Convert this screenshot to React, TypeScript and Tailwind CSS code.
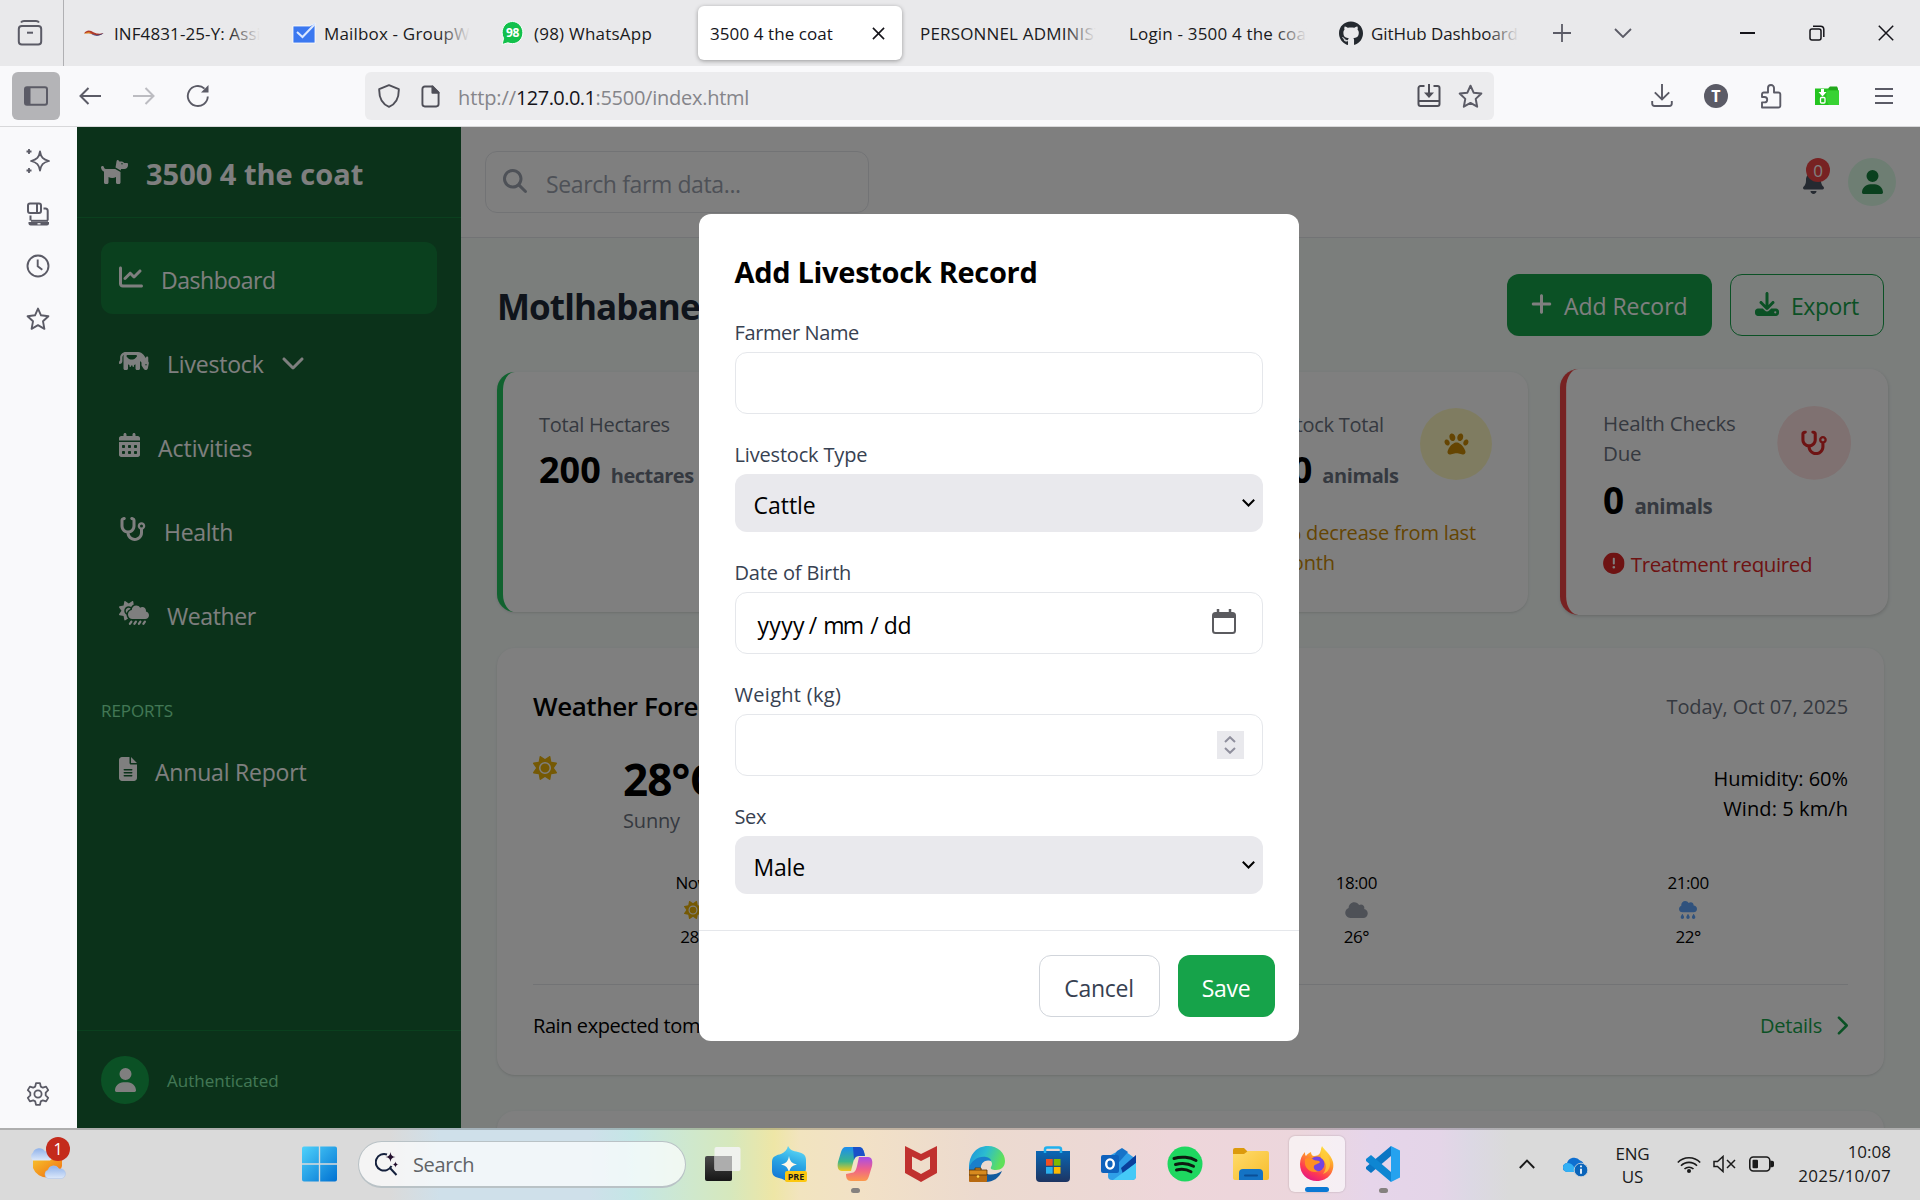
import type { ComponentType, ReactNode } from 'react';
import {
  FaBell,
  FaCalendarDays,
  FaChartLine,
  FaChevronDown,
  FaChevronRight,
  FaCircleExclamation,
  FaCloud,
  FaCloudRain,
  FaCloudSunRain,
  FaCow,
  FaDog,
  FaDownload,
  FaFileLines,
  FaGithub,
  FaMagnifyingGlass,
  FaPaw,
  FaPlus,
  FaStethoscope,
  FaSun,
  FaUser,
} from 'react-icons/fa6';

type IconType = ComponentType<{ className?: string }>;

/* ---------- Browser tab strip ---------- */

function Tab({ icon, title, width, tracking, fade }: { icon?: ReactNode; title: string; width: string; tracking: string; fade?: boolean }) {
  return (
    <div className={`flex h-full shrink-0 items-center ${width}`}>
      {icon}
      <div className="relative min-w-0 flex-1 overflow-hidden pt-px">
        <span className={`whitespace-nowrap text-[17px] leading-6 text-[#1a1a20] ${tracking}`}>{title}</span>
        {fade && <div className="absolute inset-y-0 right-0 w-8 bg-gradient-to-r from-transparent to-[#e9e9eb]" />}
      </div>
    </div>
  );
}

function TabBar() {
  return (
    <div className="relative flex h-[66px] shrink-0 items-center bg-[#e9e9eb]">
      <div className="flex h-full w-16 shrink-0 items-center border-r border-[#b0b0b3] pl-[17px]">
        <svg viewBox="0 0 26 26" className="h-[26px] w-[26px]" fill="none" stroke="#5b5b66" strokeWidth="2">
          <path d="M4 2.5 Q5 1 7 1 H19 Q21 1 22 2.5" />
          <rect x="1.8" y="6" width="22.4" height="18.5" rx="3" />
          <path d="M10 12.7h6" />
        </svg>
      </div>
      <div className="flex h-full items-center pl-[18px]">
        <Tab
          width="w-[210px] pr-[32px]"
          tracking="tracking-[0.1px]"
          fade
          title="INF4831-25-Y: Assignment"
          icon={
            <svg viewBox="0 0 24 24" className="mr-2 h-6 w-6 shrink-0">
              <path d="M2 12.500C5 8.500 8 9 12 11.500c3.500 1.500 6 1.500 9.500.500-3 3-7.500 2.500-10.500 1.500-3-1.500-6-1.500-9-1z" fill="#b03a2a" />
              <path d="M9 12.800c4 1.700 8 1.500 12.500-.8-3.500 3.300-8.500 3.600-12.500.8z" fill="#2a3170" />
              <path d="M2 12.800c3-2 6-2 8 0-3-.8-5-.5-8 0z" fill="#f0a020" />
            </svg>
          }
        />
        <Tab
          width="w-[209px] pr-[31px]"
          tracking="tracking-[0.17px]"
          fade
          title="Mailbox - GroupWise"
          icon={
            <svg viewBox="0 0 24 24" className="mr-2 h-6 w-6 shrink-0">
              <path d="M1 5h17l5-3v20H1z" fill="#3b78f0" stroke="#fff" strokeWidth=".8" />
              <path d="M5 11l5.500 5L23 3" fill="none" stroke="#dbe8ff" strokeWidth="2" />
            </svg>
          }
        />
        <Tab
          width="w-[197px]"
          tracking="tracking-[0.22px]"
          title="(98) WhatsApp"
          icon={
            <span className="relative mr-2.5 flex h-[26px] w-[23px] shrink-0 items-center justify-center">
              <svg viewBox="0 0 24 26" className="absolute inset-0 h-[26px] w-[23px]">
                <path d="M12 1C6 1 1.200 6 1.200 12.500c0 2.300.5 4.300 1.500 6L1.200 25l6-1.800c1.500.6 3 .9 4.800.9 6 0 10.800-5 10.800-11.300S18 1 12 1z" fill="#12c04b" stroke="#fff" strokeWidth="1" />
              </svg>
              <span className="relative text-[12px] font-bold leading-none tracking-tight text-white">98</span>
            </span>
          }
        />
        <div className="flex h-[54px] w-[204px] shrink-0 items-center justify-between rounded-md bg-white pl-3 pr-[17px] shadow-[0_1px_4px_rgba(0,0,0,0.35)]">
          <span className="whitespace-nowrap pt-px text-[17px] leading-6 tracking-[0.08px] text-[#15141a]">3500 4 the coat</span>
          <svg viewBox="0 0 14 14" className="h-[13px] w-[13px]" stroke="#15141a" strokeWidth="1.700">
            <path d="M1 1l12 12M13 1L1 13" />
          </svg>
        </div>
        <div className="w-[18px]" />
        <Tab width="w-[209px] pr-[33px]" tracking="tracking-[0.17px]" fade title="PERSONNEL ADMINISTRATION" />
        <Tab width="w-[210px] pr-[32px]" tracking="tracking-[0.18px]" fade title="Login - 3500 4 the coat" />
        <Tab width="w-[180px]" tracking="tracking-[-0.08px]" fade title="GitHub Dashboard" icon={<FaGithub className="mr-2 h-[25px] w-[24px] shrink-0 text-[#24292f]" />} />
      </div>
      <div className="ml-[34px] flex items-center">
        <svg viewBox="0 0 18 18" className="h-[18px] w-[18px]" stroke="#5b5b66" strokeWidth="1.800">
          <path d="M9 0v18M0 9h18" />
        </svg>
        <svg viewBox="0 0 18 10" className="ml-[43px] h-[10px] w-[18px]" stroke="#5b5b66" strokeWidth="1.800" fill="none">
          <path d="M1 1l8 8 8-8" />
        </svg>
      </div>
      <div className="ml-auto flex items-center pr-[26px]">
        <div className="h-[1.500px] w-[15px] bg-[#15141a]" />
        <svg viewBox="0 0 16 16" className="ml-[54px] h-4 w-4" stroke="#15141a" strokeWidth="1.500" fill="none">
          <rect x="1" y="4" width="11" height="11" rx="2" />
          <path d="M4 1.200h7.500a3.300 3.300 0 013.300 3.300V12" />
        </svg>
        <svg viewBox="0 0 16 16" className="ml-[53px] h-4 w-4" stroke="#15141a" strokeWidth="1.500">
          <path d="M.8.8l14.400 14.400M15.200.8L.8 15.200" />
        </svg>
      </div>
    </div>
  );
}

/* ---------- Navigation toolbar ---------- */

function StarOutline({ className }: { className?: string }) {
  return (
    <svg viewBox="0 0 24 24" className={className} fill="none" stroke="#5b5b66" strokeWidth="1.900" strokeLinejoin="round">
      <path d="M12 1.600l3 6.700 7.400.9-5.400 5.100 1.400 7.500L12 18.200l-6.400 3.600L7 14.300 1.600 9.200 9 8.300z" />
    </svg>
  );
}

function Toolbar() {
  return (
    <div className="flex h-[61px] shrink-0 items-center border-b border-[#d8d8da] bg-[#f9f9fb]">
      <div className="ml-3 flex h-12 w-12 items-center justify-center rounded-md bg-[#b4b4b7]">
        <svg viewBox="0 0 24 20" className="h-5 w-6">
          <rect x="1" y="1.200" width="22" height="17.600" rx="2" fill="none" stroke="#5b5b66" strokeWidth="2" />
          <rect x="1" y="1.200" width="5.500" height="17.600" fill="#5b5b66" />
        </svg>
      </div>
      <svg viewBox="0 0 22 18" className="ml-[19px] h-[18px] w-[22px]" fill="none" stroke="#5b5b66" strokeWidth="2">
        <path d="M22 9H1.500M9.500 1l-8 8 8 8" />
      </svg>
      <svg viewBox="0 0 22 18" className="ml-8 h-[18px] w-[22px]" fill="none" stroke="#bcbcc1" strokeWidth="2">
        <path d="M0 9h20.500M12.500 1l8 8-8 8" />
      </svg>
      <svg viewBox="0 0 24 24" className="ml-[31px] h-6 w-6" fill="none" stroke="#5b5b66" strokeWidth="1.900">
        <path d="M21.800 12.500A10 10 0 1 1 18.500 4.600" />
        <path d="M22.500 1v7.500H15z" fill="#5b5b66" stroke="none" />
      </svg>
      <div className="ml-[155px] flex h-12 w-[1129px] items-center rounded-md bg-[#ececee] pl-[13px] pr-[11px]">
        <svg viewBox="0 0 22 24" className="h-6 w-[22px]" fill="none" stroke="#4f4f58" strokeWidth="1.900" strokeLinejoin="round">
          <path d="M11 1.200l9.800 4C21 14 18 20 11 22.800 4 20 1 14 1.200 5.200z" />
        </svg>
        <svg viewBox="0 0 20 24" className="ml-[21px] h-[23px] w-[19px]" fill="none" stroke="#4f4f58" strokeWidth="2" strokeLinejoin="round">
          <path d="M12 1.500H4A2.500 2.500 0 001.500 4v16A2.500 2.500 0 004 22.500h12a2.500 2.500 0 002.500-2.500V8z" />
          <path d="M12 1.500V8h6.500z" fill="#4f4f58" />
        </svg>
        <div className="ml-[18px] flex pt-[3px] text-xl leading-7 text-[#85858a]">
          <span className="tracking-[-0.1px]">http://</span>
          <span className="tracking-[-0.55px] text-[#15141a]">127.0.0.1</span>
          <span className="tracking-[-0.26px]">:5500/index.html</span>
        </div>
        <svg viewBox="0 0 24 24" className="ml-auto h-6 w-6" fill="none" stroke="#4f4f58" strokeWidth="2">
          <path d="M7.500 2H3.500A2 2 0 001.500 4v16a2 2 0 002 2h17a2 2 0 002-2V4a2 2 0 00-2-2h-4M1.500 17h21M12 0v11" />
          <path d="M7 8.500h10l-5 5.500z" fill="#4f4f58" stroke="none" />
        </svg>
        <StarOutline className="ml-[17px] h-[25px] w-[25px]" />
      </div>
      <div className="ml-auto flex items-center pr-[27px]">
        <svg viewBox="0 0 22 24" className="h-6 w-[22px]" fill="none" stroke="#5b5b66" strokeWidth="1.900">
          <path d="M11 0v15M3.800 8.300L11 15.500l7.200-7.200M1.200 17v2.500A2.500 2.500 0 003.700 22h14.600a2.500 2.500 0 002.500-2.500V17" />
        </svg>
        <span className="ml-[31px] flex h-6 w-6 items-center justify-center rounded-full bg-[#5b5b66] text-base font-bold leading-none text-white">T</span>
        <svg viewBox="0 0 22 25" className="ml-8 h-[25px] w-[22px]" fill="none" stroke="#5b5b66" strokeWidth="1.900" strokeLinejoin="round">
          <path d="M2 23.500h16.500a1.800 1.800 0 001.800-1.800V10.300a1.800 1.800 0 00-1.800-1.800H14V4a3 3 0 00-6 0v4.500H3.800A1.800 1.800 0 002 10.300V13h2.500a2.700 2.700 0 010 5.400H2z" />
        </svg>
        <svg viewBox="0 0 24 20" className="ml-[33px] h-5 w-6">
          <path d="M13 2.500L15 .5h7l1 2v4H13z" fill="#22a81c" />
          <path d="M0 2.500h13l2 2h9V19H0z" fill="#24c41f" />
          <path d="M12 4.500h12V19H14c-3-4-3-9-2-14.500z" fill="#38d233" />
          <path d="M6 3h3v3h2.500l-4 4.500L3.500 6H6z" fill="#fff" />
          <rect x="5.500" y="11.500" width="4.500" height="5.500" rx="1" fill="none" stroke="#fff" strokeWidth="1.300" />
        </svg>
        <svg viewBox="0 0 18 16" className="ml-[36px] h-4 w-[18px]" stroke="#5b5b66" strokeWidth="1.900">
          <path d="M0 1h18M0 8h18M0 15h18" />
        </svg>
      </div>
    </div>
  );
}

function BrowserRail() {
  return (
    <div className="flex w-[77px] shrink-0 flex-col items-center bg-[#f9f9fb] pb-[22px] pr-0.5 pt-[22px]">
      <svg viewBox="0 0 24 24" className="h-6 w-6" fill="none" stroke="#5b5b66" strokeWidth="1.800" strokeLinejoin="round">
        <path d="M14 2.500c1 6 3 8 9 9.500-6 1.500-8 3.500-9 9.500-1-6-3-8-9-9.500 6-1.500 8-3.500 9-9.500zM3 0v5M.5 2.500h5M3 19v5M.5 21.500h5" />
      </svg>
      <svg viewBox="0 0 24 24" className="mt-[29px] h-6 w-6" fill="none" stroke="#5b5b66" strokeWidth="2">
        <rect x="2" y="1.500" width="13" height="9.500" rx="2" />
        <path d="M11 1.500V11M17.500 6.500h2A2.200 2.200 0 0121.700 9v9.500M4.500 13.500v5" />
        <path d="M2.500 20H23v1.500a2 2 0 01-2 2H4.500a2 2 0 01-2-2z" fill="#5b5b66" stroke="none" />
        <path d="M5 18.800h17" />
        <path d="M11.500 21.800h3" stroke="#f9f9fb" strokeWidth="1.300" />
      </svg>
      <svg viewBox="0 0 24 24" className="mt-7 h-6 w-6" fill="none" stroke="#5b5b66" strokeWidth="1.900">
        <circle cx="12" cy="12" r="10.500" />
        <path d="M11.700 5.500v6.700l4.600 3.600" />
      </svg>
      <StarOutline className="mt-[29px] h-6 w-6" />
      <svg viewBox="0 0 24 24" className="mt-auto h-6 w-6" fill="none" stroke="#5b5b66" strokeWidth="1.800" strokeLinejoin="round">
        <path d="M10 1.200h4l.8 3.400 2 1.100 3.300-1.100 2.100 3.500-2.500 2.500v2.800l2.500 2.500-2.100 3.500-3.300-1.100-2 1.100-.8 3.400h-4l-.8-3.400-2-1.100-3.300 1.100-2.100-3.500 2.500-2.500v-2.800L1.800 8.100l2.100-3.500 3.300 1.100 2-1.100z" />
        <circle cx="12" cy="12" r="3.600" />
      </svg>
    </div>
  );
}

/* ---------- Farm dashboard ---------- */

function NavItem({ icon: Icon, iconSize, label, tracking, active, children }: { icon: IconType; iconSize: string; label: string; tracking: string; active?: boolean; children?: ReactNode }) {
  return (
    <div className={`flex h-[72px] items-center rounded-xl px-[18px] ${active ? 'bg-[#15803d]' : ''}`}>
      <Icon className={`-mt-0.5 h-6 shrink-0 ${iconSize}`} />
      <span className={`ml-[18px] pt-[3px] text-[23px] leading-9 ${tracking}`}>{label}</span>
      {children}
    </div>
  );
}

function Sidebar() {
  return (
    <aside className="flex w-96 shrink-0 flex-col bg-[#166534] text-white">
      <div className="flex h-[91px] shrink-0 items-center border-b border-[#15803d] px-6">
        <FaDog className="h-6 w-[27px]" />
        <h1 className="ml-[18px] whitespace-nowrap pt-[3px] text-[29px] font-bold leading-[42px]">3500 4 the coat</h1>
      </div>
      <nav className="flex flex-col gap-3 px-6 pt-6">
        <NavItem icon={FaChartLine} iconSize="w-6" label="Dashboard" tracking="tracking-[-0.45px]" active />
        <NavItem icon={FaCow} iconSize="w-[30px]" label="Livestock" tracking="tracking-[-0.2px]">
          <FaChevronDown className="ml-[17px] h-[26px] w-[24px]" />
        </NavItem>
        <NavItem icon={FaCalendarDays} iconSize="w-[21px]" label="Activities" tracking="tracking-[-0.03px]" />
        <NavItem icon={FaStethoscope} iconSize="w-[27px]" label="Health" tracking="tracking-[-0.3px]" />
        <NavItem icon={FaCloudSunRain} iconSize="w-[30px]" label="Weather" tracking="tracking-[-0.4px]" />
        <div className="mt-[37px] flex flex-col gap-[11px]">
          <h3 className="text-[17px] leading-6 tracking-[-0.08px] text-[#86efac]">REPORTS</h3>
          <NavItem icon={FaFileLines} iconSize="w-[18px]" label="Annual Report" tracking="tracking-[-0.2px]" />
        </div>
      </nav>
      <div className="mt-auto flex h-[98px] shrink-0 items-center border-t border-[#15803d] px-6">
        <div className="flex h-12 w-12 items-center justify-center rounded-full bg-[#16a34a]">
          <FaUser className="h-6 w-[21px]" />
        </div>
        <span className="ml-[18px] pt-0.5 text-[17px] leading-6 text-[#86efac]">Authenticated</span>
      </div>
    </aside>
  );
}

function TopBar() {
  return (
    <header className="flex h-[111px] shrink-0 items-center justify-between border-b border-[#e5e7eb] bg-white px-6">
      <div className="flex h-[62px] w-96 items-center rounded-xl border border-[#e5e7eb] pl-[17px]">
        <FaMagnifyingGlass className="-mt-0.5 h-6 w-6 text-[#9ca3af]" />
        <span className="ml-[19px] pt-[3px] text-[23px] leading-9 tracking-[-0.38px] text-[#9ca3af]">Search farm data...</span>
      </div>
      <div className="flex items-center gap-6">
        <div className="relative flex h-12 w-[21px] items-center">
          <FaBell className="h-6 w-[21px] text-[#4b5563]" />
          <span className="absolute -right-[6px] top-0 flex h-6 w-6 items-center justify-center rounded-full bg-[#ef4444] text-[17px] leading-none text-white">0</span>
        </div>
        <div className="flex h-12 w-12 items-center justify-center rounded-full bg-[#dcfce7]">
          <FaUser className="h-6 w-[21px] text-[#15803d]" />
        </div>
      </div>
    </header>
  );
}

function StatCard({ border, label, value, unit, unitTracking, icon: Icon, badge, raised, children }: { border: string; label: string; value: string; unit: string; unitTracking: string; icon?: IconType; badge?: string; raised?: boolean; children?: ReactNode }) {
  return (
    <div className={`h-60 rounded-[18px] border-l-[6px] bg-white p-9 ${border} ${raised ? 'scale-[1.025] shadow' : 'shadow-sm'}`}>
      <div className="flex items-start justify-between">
        <div className="min-w-0 pt-0.5">
          <p className="text-xl leading-[30px] tracking-[-0.24px] text-[#6b7280]">{label}</p>
          <p className="mt-1.5 flex items-baseline whitespace-nowrap text-[36px] font-bold leading-[48px] text-black">
            {value}
            <span className={`ml-[10px] text-xl text-[#6b7280] ${unitTracking}`}>{unit}</span>
          </p>
        </div>
        {Icon && (
          <div className={`flex h-[72px] w-[72px] shrink-0 items-center justify-center rounded-full ${badge}`}>
            <Icon className="h-6 w-[27px]" />
          </div>
        )}
      </div>
      {children}
    </div>
  );
}

function Stats() {
  return (
    <div className="mt-9 grid grid-cols-4 gap-9">
      <StatCard border="border-[#22c55e]" label="Total Hectares" value="200" unit="hectares" unitTracking="tracking-[-0.5px]" />
      <StatCard border="border-[#3b82f6]" label="Farmers" value="12" unit="people" unitTracking="tracking-[-0.5px]" />
      <StatCard border="border-[#eab308]" label="Livestock Total" value="120" unit="animals" unitTracking="tracking-[-0.4px]" icon={FaPaw} badge="bg-[#fef9c3] text-[#ca8a04]">
        <div className="mt-6 pl-[23px] text-xl leading-[30px] tracking-[-0.18px] text-[#ca8a04]">
          5% decrease from last
          <br />
          month
        </div>
      </StatCard>
      <StatCard border="border-[#ef4444]" label="Health Checks Due" value="0" unit="animals" unitTracking="tracking-[-0.44px]" icon={FaStethoscope} badge="bg-[#fee2e2] text-[#dc2626]" raised>
        <div className="mt-6 flex items-center text-xl leading-[30px] tracking-[-0.37px] text-[#dc2626]">
          <FaCircleExclamation className="-mt-1 h-[21px] w-[21px]" />
          <span className="ml-[6px] whitespace-nowrap">Treatment required</span>
        </div>
      </StatCard>
    </div>
  );
}

function Hour({ time, temp, icon: Icon, color }: { time: string; temp: string; icon: IconType; color: string }) {
  return (
    <div className="flex flex-col items-center text-[17px] leading-6 tracking-[-0.45px] text-black">
      <span className="pt-px">{time}</span>
      <div className="flex h-[29px] items-center">
        <Icon className={`h-[18px] ${color}`} />
      </div>
      <span className="pt-px">{temp}</span>
    </div>
  );
}

function WeatherCard() {
  return (
    <section className="mt-9 flex h-[427px] shrink-0 flex-col rounded-[18px] bg-white px-9 pt-9 shadow-sm">
      <div className="flex h-[42px] items-center justify-between pt-[3px]">
        <h3 className="text-[26px] font-semibold tracking-[-0.44px] text-black">Weather Forecast</h3>
        <span className="text-xl tracking-[-0.09px] text-[#6b7280]">Today, Oct 07, 2025</span>
      </div>
      <div className="mt-6 flex h-[84px] items-center">
        <FaSun className="mt-1.5 h-6 w-6 shrink-0 self-start text-[#eab308]" />
        <div className="ml-[66px] pt-[3px]">
          <p className="text-[44px] font-bold leading-[54px] tracking-[-0.9px] text-black">28°C</p>
          <p className="text-xl leading-[30px] tracking-[-0.16px] text-[#6b7280]">Sunny</p>
        </div>
        <div className="ml-auto pt-[3px] text-right text-xl leading-[30px] text-black">
          <p className="tracking-[-0.03px]">Humidity: 60%</p>
          <p className="tracking-[0.08px]">Wind: 5 km/h</p>
        </div>
      </div>
      <div className="mt-9 grid grid-cols-4 gap-3">
        <Hour time="Now" temp="28°" icon={FaSun} color="w-[18px] text-[#eab308]" />
        <Hour time="15:00" temp="27°" icon={FaSun} color="w-[18px] text-[#eab308]" />
        <Hour time="18:00" temp="26°" icon={FaCloud} color="w-[23px] text-[#9ca3af]" />
        <Hour time="21:00" temp="22°" icon={FaCloudRain} color="w-[18px] text-[#60a5fa]" />
      </div>
      <div className="mt-[35px] flex items-center justify-between border-t border-[#e5e7eb] pt-[26px] text-xl leading-[30px]">
        <span className="tracking-[-0.42px] text-black">Rain expected tomorrow</span>
        <span className="flex items-center tracking-[-0.23px] text-[#16a34a]">
          Details
          <FaChevronRight className="-mt-0.5 ml-[13px] h-[21px] w-[13px]" />
        </span>
      </div>
    </section>
  );
}

function Dashboard() {
  return (
    <div className="flex min-w-0 flex-1 flex-col overflow-hidden bg-[#f6fcf9]">
      <TopBar />
      <main className="flex min-h-0 flex-1 flex-col overflow-hidden px-9 pt-9">
        <div className="flex h-[62px] shrink-0 items-center justify-between">
          <h2 className="pt-[5px] text-[35px] font-bold tracking-[-0.9px] text-[#1f2937]">Motlhabane Farm</h2>
          <div className="flex h-full gap-[18px]">
            <div className="flex w-[205px] items-center rounded-xl bg-[#16a34a] pl-6 text-[23px] tracking-[-0.06px] text-white">
              <FaPlus className="-mt-0.5 h-6 w-[21px]" />
              <span className="ml-3 whitespace-nowrap pt-[3px]">Add Record</span>
            </div>
            <div className="flex w-[154px] items-center rounded-xl border border-[#16a34a] pl-6 text-[23px] tracking-[-0.45px] text-[#16a34a]">
              <FaDownload className="-mt-0.5 h-6 w-6" />
              <span className="ml-3 pt-[3px]">Export</span>
            </div>
          </div>
        </div>
        <Stats />
        <WeatherCard />
        <div className="mt-9 h-40 shrink-0 rounded-[18px] bg-white shadow-sm" />
      </main>
    </div>
  );
}

/* ---------- Add livestock modal ---------- */

function Field({ label, tracking, children }: { label: string; tracking: string; children: ReactNode }) {
  return (
    <div className="mt-6 flex flex-col">
      <span className={`mb-1 pt-0.5 text-xl leading-[30px] text-[#374151] ${tracking}`}>{label}</span>
      {children}
    </div>
  );
}

function SelectBox({ value, tracking }: { value: string; tracking: string }) {
  return (
    <div className="flex h-[58px] items-center justify-between rounded-xl bg-[#e9e9ed] pl-[19px] pr-2">
      <span className={`pt-[3px] text-[23px] leading-9 text-black ${tracking}`}>{value}</span>
      <svg viewBox="0 0 13 8" className="h-2 w-[13px]" fill="none" stroke="#000" strokeWidth="2">
        <path d="M.8.8l5.700 5.700L12.200.8" />
      </svg>
    </div>
  );
}

function Modal() {
  return (
    <div className="w-[600px] rounded-xl bg-white">
      <div className="px-9 pb-9 pt-[37px]">
        <h2 className="-mb-px text-[29px] font-bold leading-[42px] tracking-[-0.31px] text-black">Add Livestock Record</h2>
        <Field label="Farmer Name" tracking="tracking-[-0.38px]">
          <div className="h-[62px] rounded-xl border border-[#e5e7eb]" />
        </Field>
        <Field label="Livestock Type" tracking="tracking-[-0.17px]">
          <SelectBox value="Cattle" tracking="tracking-[-0.02px]" />
        </Field>
        <Field label="Date of Birth" tracking="tracking-[-0.15px]">
          <div className="flex h-[62px] items-center rounded-xl border border-[#e5e7eb] pl-[22px] pr-[26px] text-[23px] leading-9 text-black">
            <div className="flex pt-[3px]">
              <span className="tracking-[0.3px]">yyyy</span>
              <span className="ml-1">/</span>
              <span className="ml-[6px] tracking-[-1.800px]">mm</span>
              <span className="ml-[8px]">/</span>
              <span className="ml-[5px] tracking-[-0.3px]">dd</span>
            </div>
            <svg viewBox="0 0 24 25" className="-mt-1 ml-auto h-[25px] w-6" fill="none" stroke="#5b5b5f">
              <rect x="1" y="4" width="22" height="20" rx="2.500" strokeWidth="2" />
              <path d="M1 6h22M6 0v5M18 0v5" strokeWidth="2.500" />
              <path d="M2 7h20" strokeWidth="4" />
            </svg>
          </div>
        </Field>
        <Field label="Weight (kg)" tracking="tracking-[0.3px]">
          <div className="flex h-[62px] items-center justify-end rounded-xl border border-[#e5e7eb] pr-[18px]">
            <div className="flex h-7 w-[27px] flex-col items-center justify-between bg-[#e9e9ed] py-[5px]">
              <svg viewBox="0 0 12 7" className="h-[7px] w-3" fill="none" stroke="#8f8f9d" strokeWidth="2">
                <path d="M1 6l5-4.800L11 6" />
              </svg>
              <svg viewBox="0 0 12 7" className="h-[7px] w-3" fill="none" stroke="#8f8f9d" strokeWidth="2">
                <path d="M1 1l5 4.800L11 1" />
              </svg>
            </div>
          </div>
        </Field>
        <Field label="Sex" tracking="tracking-[-0.4px]">
          <SelectBox value="Male" tracking="tracking-[-0.2px]" />
        </Field>
      </div>
      <div className="flex h-[111px] items-center justify-end gap-[18px] border-t border-[#e5e7eb] px-6 text-[23px] leading-9">
        <div className="flex h-[62px] w-[121px] items-center justify-center rounded-xl border border-[#d1d5db] pt-[3px] tracking-[-0.25px] text-[#374151]">Cancel</div>
        <div className="flex h-[62px] w-[97px] items-center justify-center rounded-xl bg-[#16a34a] pt-[3px] tracking-[-0.35px] text-white">Save</div>
      </div>
    </div>
  );
}

/* ---------- Taskbar ---------- */

function TaskApp({ children, active, running }: { children: ReactNode; active?: boolean; running?: boolean }) {
  return (
    <div className="flex h-full w-[66px] shrink-0 items-center justify-center">
      <div className={`relative flex h-14 w-14 items-center justify-center rounded-md ${active ? 'bg-white/60 shadow-[0_0_2px_rgba(0,0,0,0.25)]' : ''}`}>
        <svg viewBox="0 0 36 36" className="h-9 w-9">
          {children}
        </svg>
        {active && <span className="absolute bottom-0 h-[5px] w-6 rounded-full bg-[#0a78d4]" />}
        {running && <span className="absolute -bottom-px h-[5px] w-[9px] rounded-full bg-[#85817f]" />}
      </div>
    </div>
  );
}

function Gradients() {
  return (
    <svg className="absolute h-0 w-0">
      <defs>
        <linearGradient id="win" x1="0" y1="0" x2="1" y2="1">
          <stop offset="0" stopColor="#4fd2fb" />
          <stop offset="1" stopColor="#0071d2" />
        </linearGradient>
        <linearGradient id="sky" x1=".6" y1="0" x2=".3" y2="1">
          <stop offset="0" stopColor="#5fd8f5" />
          <stop offset=".45" stopColor="#2aa6e4" />
          <stop offset="1" stopColor="#1173d4" />
        </linearGradient>
        <linearGradient id="copA" x1="0" y1="0" x2="0" y2="1">
          <stop offset="0" stopColor="#1c8df0" />
          <stop offset=".6" stopColor="#3cb58c" />
          <stop offset="1" stopColor="#f2c81d" />
        </linearGradient>
        <linearGradient id="copB" x1="0" y1="0" x2="0" y2="1">
          <stop offset="0" stopColor="#a64ee8" />
          <stop offset=".5" stopColor="#ee5f8d" />
          <stop offset="1" stopColor="#fb9a4c" />
        </linearGradient>
        <linearGradient id="edge" x1="0" y1="0" x2="1" y2=".3">
          <stop offset="0" stopColor="#1c8fdc" />
          <stop offset=".5" stopColor="#2bbcd0" />
          <stop offset="1" stopColor="#5fe05a" />
        </linearGradient>
        <linearGradient id="store" x1="0" y1="0" x2="0" y2="1">
          <stop offset="0" stopColor="#0a67b5" />
          <stop offset="1" stopColor="#1d3461" />
        </linearGradient>
        <linearGradient id="fold" x1="0" y1="0" x2="1" y2="1">
          <stop offset="0" stopColor="#ffdb6b" />
          <stop offset="1" stopColor="#f7bd2c" />
        </linearGradient>
        <linearGradient id="fox" x1=".8" y1="0" x2=".3" y2="1">
          <stop offset="0" stopColor="#fff04a" />
          <stop offset=".4" stopColor="#ff9a2a" />
          <stop offset=".75" stopColor="#ff3b50" />
          <stop offset="1" stopColor="#e31587" />
        </linearGradient>
        <linearGradient id="sun" x1="0" y1="0" x2="1" y2="1">
          <stop offset="0" stopColor="#f7c22c" />
          <stop offset="1" stopColor="#f06a10" />
        </linearGradient>
        <linearGradient id="cloud" x1="0" y1="0" x2="0" y2="1">
          <stop offset="0" stopColor="#8fb2ea" />
          <stop offset="1" stopColor="#dce8fa" />
        </linearGradient>
        <linearGradient id="dark" x1="0" y1="0" x2="0" y2="1">
          <stop offset="0" stopColor="#4a4a4a" />
          <stop offset="1" stopColor="#161616" />
        </linearGradient>
      </defs>
    </svg>
  );
}

function Taskbar() {
  return (
    <div className="relative flex h-[72px] shrink-0 items-center border-t-2 border-black/20 bg-[linear-gradient(90deg,#dadada_0px,#dadada_390px,#cfe0ea_440px,#cfe0ea_590px,#c4e6e6_632px,#cfe8cd_690px,#d6e8bd_730px,#eee6a6_774px,#f2e4bf_800px,#f2e1c6_860px,#ecdacf_980px,#ecd8d5_1100px,#eed6da_1170px,#ecd6dc_1300px,#e6d5ea_1370px,#e4d5e8_1440px,#dcd8e4_1470px,#dadada_1510px,#dadada_1920px)] bg-origin-border pb-0.5">
      <Gradients />
      <div className="relative ml-[29px] h-10 w-10 shrink-0">
        <svg viewBox="0 0 40 40" className="h-10 w-10">
          <path d="M4 14h29v8a15 14 0 01-29 2z" fill="url(#sun)" />
          <path d="M4 16.500a5 5 0 010-8 6.500 6 0 0112-1 5 5 0 015 9z" fill="url(#cloud)" />
          <path d="M19 34.500a4.500 4.500 0 010-8.500 6 6 0 0111-1 4.700 4.700 0 013 9.500z" fill="url(#cloud)" stroke="#a8c0ea" strokeWidth=".5" />
        </svg>
        <span className="absolute -top-[7px] left-[17px] flex h-6 w-6 items-center justify-center rounded-full bg-[#c42b1c] text-base leading-none text-white">1</span>
      </div>
      <svg viewBox="0 0 36 36" className="ml-[233px] h-9 w-[35px] shrink-0">
        <path d="M0 2a2 2 0 012-2h15.300v17.300H0zM18.700 0H34a2 2 0 012 2v15.300H18.700zM0 18.700h17.300V36H2a2 2 0 01-2-2zM18.700 18.700H36V34a2 2 0 01-2 2H18.700z" fill="url(#win)" />
      </svg>
      <div className="ml-[21px] flex h-[47px] w-[328px] shrink-0 items-center rounded-full border border-b-2 border-[#b9c2c6] bg-white/70 pl-[16px]">
        <svg viewBox="0 0 24 24" className="h-6 w-6" fill="none" stroke="#14203c" strokeWidth="2">
          <path d="M12 2.500A8.300 8.300 0 1 0 16.500 14M15 16l6.500 7" />
          <path d="M15.500 0c.7 3.500 1.500 4.300 5 5-3.500.7-4.300 1.500-5 5-.7-3.500-1.500-4.300-5-5 3.500-.7 4.300-1.500 5-5zM20.500 9.500c.4 2 1 2.600 3 3-2 .4-2.600 1-3 3-.4-2-1-2.600-3-3 2-.4 2.600-1 3-3z" fill="#24102e" stroke="none" />
        </svg>
        <span className="ml-[14px] pt-[3px] text-xl leading-7 tracking-[-0.35px] text-[#5f6366]">Search</span>
      </div>
      <div className="ml-[4px] flex h-full">
        <TaskApp>
          <rect x="0" y="10" width="27" height="25" rx="2" fill="url(#dark)" />
          <rect x="9.500" y="1" width="26" height="24" rx="2" fill="#f2f2f2" fillOpacity=".92" />
          <path d="M9.500 10H27v15H11.500a2 2 0 01-2-2z" fill="#adadad" />
        </TaskApp>
        <TaskApp>
          <path d="M17 0c2 4 5 5 10 6 5 1 8 3 8 8v8c0 6-4 8-8 9l-10 5c-3-2-5-3-9-4-5-1-7-3-7-8v-8c0-6 5-7 9-8 4-2 6-4 7-8z" fill="url(#sky)" />
          <path d="M18 10c1 5.500 3 7.500 8 8.500-5 1-7 3-8 8.500-1-5.500-3-7.500-8-8.500 5-1 7-3 8-8.500z" fill="#fff8e8" />
          <rect x="14" y="25" width="22" height="11" rx="2" fill="#fcc70f" />
          <text x="25" y="34" textAnchor="middle" fontSize="9" fontWeight="700" fontFamily="Open Sans, sans-serif" fill="#1a1a1a">PRE</text>
        </TaskApp>
        <TaskApp running>
          <path d="M9 1h13c4 0 5 4 6 9h-6c-4 0-5 3-6 7l-2 8H5c-4 0-5-4-4-9l3-10c1-3 2-5 5-5z" fill="url(#copA)" />
          <path d="M16 1h6c4 0 5 4 6 9h-6c-3 0-4 1-5 4z" fill="#1b50c8" />
          <path d="M27 35H14c-4 0-5-3-5-7l5-1c4 0 5-3 6-7l2-9h9c4 0 5 4 4 9l-3 10c-1 3-2 5-5 5z" fill="url(#copB)" />
        </TaskApp>
        <TaskApp>
          <path d="M2 0l16 8L34 0v27l-16 9-16-9zM9 10.500v12.500l9 5 9-5V10.500l-9 4.500z" fillRule="evenodd" fill="#c0312f" />
        </TaskApp>
        <TaskApp>
          <path d="M0 22C0 9 7 0 19 0c10 0 17 7 17 15 0 6-4 9-9 9-4 0-6-1-5-3 2-3 1-7-3-7-6 0-8 5-7 10z" fill="url(#edge)" />
          <path d="M0 22C2 15 9 10 17 11c3 .5 5 2 5 4-7-2-11 3-10 9H0z" fill="#1a7fcc" />
          <path d="M12 22c1 7 12 9 21 3-3 7-9 11-16 11h-4c-2-3-3-9-1-14z" fill="#115a9e" />
          <rect x="0" y="24" width="18" height="12" rx="1" fill="#b86a10" />
          <path d="M0 24h18v5H0zM6 24v-2h6v2" fill="#d88a1e" stroke="#5b3208" strokeWidth=".8" />
          <circle cx="9" cy="30.500" r="1.300" fill="#ffd94a" />
        </TaskApp>
        <TaskApp>
          <path d="M10 7.500V3.500A2 2 0 0112 1.500h12a2 2 0 012 2v4" fill="none" stroke="#1fb0ee" strokeWidth="2.500" />
          <path d="M1 5h34v27a4 4 0 01-4 4H5a4 4 0 01-4-4z" fill="url(#store)" />
          <path d="M10 5v2M26 5v2" stroke="#1fb0ee" strokeWidth="2.500" />
          <path d="M11 13h6.700v6.700H11z" fill="#f25022" />
          <path d="M18.800 13h6.700v6.700h-6.700z" fill="#7fba00" />
          <path d="M11 21h6.700v6.700H11z" fill="#2bb0ee" />
          <path d="M18.800 21h6.700v6.700h-6.700z" fill="#ffb900" />
        </TaskApp>
        <TaskApp>
          <path d="M8 10l13-7 14 10v17a4 4 0 01-4 4H11a4 4 0 01-4-4z" fill="#2f9fe8" />
          <path d="M16 5l5-3 6 4-16 18-4-4z" fill="#1673c8" />
          <path d="M20 22l15-13v8L22 28z" fill="#0a3f9c" />
          <path d="M35 17v13a4 4 0 01-4 4H12z" fill="#45c9f7" />
          <rect x="0" y="9" width="18" height="18" rx="2" fill="#0f62bd" />
          <ellipse cx="9" cy="18" rx="3.800" ry="4.600" fill="none" stroke="#fff" strokeWidth="2.400" />
        </TaskApp>
        <TaskApp>
          <circle cx="18" cy="18" r="17.500" fill="#1ed760" />
          <path d="M7 12.500c7-2.200 16-1.500 22 2M8.500 18.500c6-1.800 13-1 18 1.800M9.500 24c5-1.200 10-.8 14.500 1.700" fill="none" stroke="#0d1a10" strokeLinecap="round" strokeWidth="3" />
        </TaskApp>
        <TaskApp>
          <path d="M0 4a2 2 0 012-2h9l4 4-4 4H0z" fill="#dc9a0c" />
          <path d="M0 8h11l4-3h19a2 2 0 012 2v25a2 2 0 01-2 2H2a2 2 0 01-2-2z" fill="url(#fold)" />
          <path d="M6 34v-7a4 4 0 014-4h16a4 4 0 014 4v7z" fill="#1473c4" />
          <path d="M12 29.500h12" stroke="#0b4f96" strokeWidth="2" strokeLinecap="round" />
        </TaskApp>
        <TaskApp active>
          <path d="M23 0c2 4 9 8 11 16 2 10-5 19-16 19C8 35 1 28 1 18c0-5 2-9 5-12 0 2 0 3 1 4 1-2 3-3 5-4 0 2 1 4 3 4 3 0 5-1 6-3 1-2 1-5 2-7z" fill="url(#fox)" />
          <circle cx="18" cy="18" r="7.500" fill="#7544e0" />
          <path d="M6 13c3-2 7-1 9 1 2 1 5 0 6 2-1 2-5 2-6 4-1 3 2 5 5 5-6 3-13-1-14-7z" fill="#ff8f22" />
          <path d="M23 1c1 5 8 8 8 17 0 6-4 9-7 10 5-7 3-13-2-16-1-4 0-8 1-11z" fill="#ffcf3a" fillOpacity=".75" />
        </TaskApp>
        <TaskApp running>
          <path d="M26 0v10L6 27l-5-4v-2z" fill="#0b76c4" />
          <path d="M26 36V26L6 9l-5 4v2z" fill="#0e86d2" />
          <path d="M26 0l9 4.500v27L26 36z" fill="#25a2ef" />
        </TaskApp>
      </div>
      <div className="ml-auto flex h-full items-center pr-[29px] text-[17px] leading-6 text-[#1a1a1a]">
        <svg viewBox="0 0 16 10" className="h-[10px] w-4" fill="none" stroke="#1a1a1a" strokeWidth="1.900">
          <path d="M.8 9L8 1.500 15.200 9" />
        </svg>
        <svg viewBox="0 0 25 21" className="ml-7 mt-1 h-[21px] w-[25px]">
          <path d="M4.500 16a4.500 4.500 0 01-.5-9A7.500 7.500 0 0117 4.500a6 6 0 014 6V16z" fill="#0f6fd0" />
          <path d="M0 11.500A4.500 4.500 0 014.500 7c5 0 7 4 9 9h-9A4.500 4.500 0 010 11.500z" fill="#33b0f4" />
          <circle cx="18" cy="14" r="6.800" fill="#0a64ba" stroke="#dadada" strokeWidth=".8" />
          <path d="M18 12.700v5M18 9.500v1.800" stroke="#fff" strokeWidth="1.700" />
        </svg>
        <div className="ml-[27px] flex w-[35px] flex-col items-center pt-0.5 leading-[23px]">
          <span className="tracking-[-0.2px]">ENG</span>
          <span>US</span>
        </div>
        <svg viewBox="0 0 24 18" className="ml-[27px] h-[18px] w-6" fill="none" stroke="#1a1a1a" strokeWidth="1.600">
          <path d="M.8 7.500a15.500 15.500 0 0122.400 0M4 10.800a11 11 0 0116 0M7.500 14a6.500 6.500 0 019 0" />
          <circle cx="12" cy="16" r="2" fill="#1a1a1a" stroke="none" />
        </svg>
        <svg viewBox="0 0 24 18" className="ml-3 h-[18px] w-6" fill="none" stroke="#1a1a1a" strokeWidth="1.500">
          <path d="M1 6.500v5h3.500L10 16.500v-15L4.500 6.500zM14 5l8 8M22 5l-8 8" />
        </svg>
        <svg viewBox="0 0 25 16" className="ml-3 h-4 w-[25px]" fill="none" stroke="#1a1a1a" strokeWidth="1.600">
          <rect x=".8" y="1" width="20" height="14" rx="3.500" />
          <path d="M22 5.500h1.200a1 1 0 011 1v3a1 1 0 01-1 1H22z" fill="#1a1a1a" />
          <rect x="3.500" y="3.800" width="5.500" height="8.400" rx="1" fill="#1a1a1a" stroke="none" />
        </svg>
        <div className="ml-[24px] flex w-[93px] flex-col items-end">
          <span>10:08</span>
          <span className="whitespace-nowrap tracking-[0.25px]">2025/10/07</span>
        </div>
      </div>
    </div>
  );
}

export default function App() {
  return (
    <div className="flex h-[1200px] w-[1920px] flex-col overflow-hidden font-['Open_Sans','Noto_Sans',sans-serif]">
      <TabBar />
      <Toolbar />
      <div className="flex min-h-0 flex-1">
        <BrowserRail />
        <div className="relative flex min-w-0 flex-1 overflow-hidden">
          <Sidebar />
          <Dashboard />
          <div className="absolute inset-0 flex items-center justify-center bg-black/50">
            <Modal />
          </div>
        </div>
      </div>
      <Taskbar />
    </div>
  );
}
